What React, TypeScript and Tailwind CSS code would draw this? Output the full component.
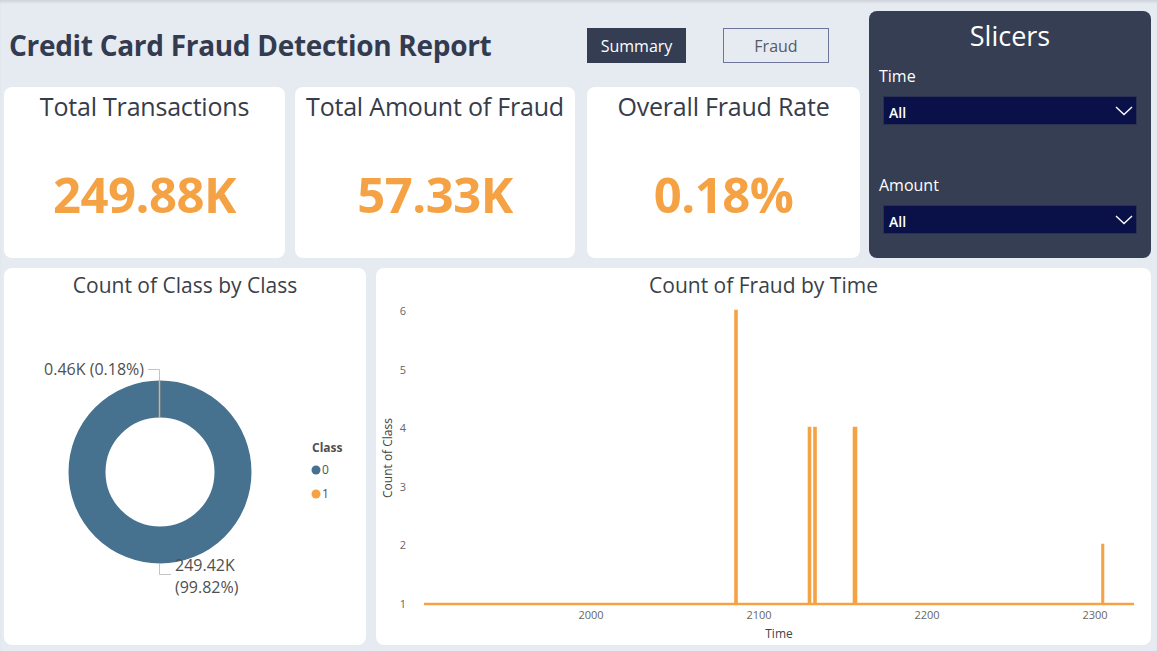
import React from "react";

const font = { fontFamily: '"Open Sans", "Noto Sans", sans-serif' };

function KpiCard({ title, value, w }: { title: string; value: string; w: string }) {
  return (
    <div className={`${w} h-[171px] bg-white rounded-[8px] flex flex-col items-center`}>
      <div className="mt-[2px] h-[34px] text-[25px] leading-[34px] text-[#363c4a] whitespace-nowrap tracking-[-0.2px]">{title}</div>
      <div className="mt-[41px] text-[49px] leading-[60px] font-bold text-[#f5a244] tracking-[-0.5px]">{value}</div>
    </div>
  );
}

function Chevron() {
  return (
    <svg width="18" height="10" viewBox="0 0 18 10" className="mr-[3px]">
      <path d="M1 1 L9 8.5 L17 1" fill="none" stroke="#ffffff" strokeWidth="1.4" />
    </svg>
  );
}

function Dropdown() {
  return (
    <div className="ml-[14px] w-[254px] h-[29px] bg-[#0a1048] border border-[#2a3150] flex items-center justify-between pl-[5px]">
      <span className="text-[14px] font-semibold text-white mt-[3px]">All</span>
      <Chevron />
    </div>
  );
}

function DonutChart() {
  return (
    <svg width="362" height="343" viewBox="0 0 362 343">
      <circle cx="156" cy="170" r="73" fill="none" stroke="#46728f" strokeWidth="37" />
      <line x1="155.5" y1="78.5" x2="155.5" y2="115.5" stroke="#d9b27c" strokeWidth="1.5" />
      <polyline points="155.5,78 155.5,67.5 144,67.5" fill="none" stroke="#c4c4c4" strokeWidth="1" />
      <text x="140" y="73" textAnchor="end" fontSize="16" fill="#505050" style={font}>0.46K (0.18%)</text>
      <polyline points="155.5,262 155.5,272.5 167,272.5" fill="none" stroke="#c4c4c4" strokeWidth="1" />
      <text x="171" y="269" fontSize="16" fill="#505050" style={font}>249.42K</text>
      <text x="171" y="291" fontSize="16" fill="#505050" style={font}>(99.82%)</text>
      <text x="308" y="150" fontSize="12" fontWeight="700" fill="#505050" style={font}>Class</text>
      <circle cx="312" cy="168" r="4.5" fill="#46728f" />
      <text x="318" y="172" fontSize="12" fill="#505050" style={font}>0</text>
      <circle cx="312" cy="192" r="4.5" fill="#f5a244" />
      <text x="318" y="196" fontSize="12" fill="#505050" style={font}>1</text>
    </svg>
  );
}

function LineChart() {
  const yLabels = [
    { v: "6", y: 9 },
    { v: "5", y: 68 },
    { v: "4", y: 126 },
    { v: "3", y: 185 },
    { v: "2", y: 243 },
    { v: "1", y: 302 },
  ];
  const xLabels = [
    { v: "2000", x: 215 },
    { v: "2100", x: 383 },
    { v: "2200", x: 551 },
    { v: "2300", x: 719 },
  ];
  const d =
    "M48 302 L359.5 302 L359.5 9 L360.5 9 L360.5 302 L433 302 L433 126 L434 126 L434 302 L438.5 302 L438.5 126 L439.5 126 L439.5 302 L478 302 L478 126 L480 126 L480 302 L726.5 302 L726.5 243 L727 243 L727 302 L758 302";
  return (
    <svg width="775" height="343" viewBox="0 0 775 343">
      {yLabels.map((l) => (
        <text key={l.v} x="27" y={l.y + 4} textAnchor="middle" fontSize="11" fill="#666666" style={font}>
          {l.v}
        </text>
      ))}
      {xLabels.map((l) => (
        <text key={l.v} x={l.x} y="317" textAnchor="middle" fontSize="11" fill="#666666" style={font}>
          {l.v}
        </text>
      ))}
      <text x="403" y="336" textAnchor="middle" fontSize="12" fill="#444444" style={font}>Time</text>
      <text
        x="0"
        y="0"
        transform="translate(16 156) rotate(-90)"
        textAnchor="middle"
        fontSize="12"
        fill="#444444"
        style={font}
      >
        Count of Class
      </text>
      <path d={d} fill="none" stroke="#f5a244" strokeWidth="2.6" strokeLinejoin="miter" />
    </svg>
  );
}

export default function App() {
  return (
    <div
      className="w-[1157px] h-[651px] bg-[#e6eaf1] overflow-hidden flex flex-col shadow-[inset_0_3px_3px_-1px_rgba(0,0,0,0.10)]"
      style={font}
    >
      <div className="flex pl-[4px] pt-[11px]">
        <div className="w-[856px] flex flex-col">
          <div className="h-[76px] flex items-start">
            <div className="w-[583px] pl-[5px] pt-[14px] text-[28px] leading-[40px] font-bold text-[#323b4f] tracking-[-0.3px] whitespace-nowrap">
              Credit Card Fraud Detection Report
            </div>
            <div className="mt-[17px] w-[99px] h-[35px] bg-[#343d52] text-white text-[16px] flex items-center justify-center">
              Summary
            </div>
            <div className="mt-[17px] ml-[37px] w-[106px] h-[35px] border border-[#70759e] text-[#555a66] text-[16px] flex items-center justify-center">
              Fraud
            </div>
          </div>
          <div className="flex h-[171px]">
            <KpiCard title="Total Transactions" value="249.88K" w="w-[281px]" />
            <div className="w-[10px]" />
            <KpiCard title="Total Amount of Fraud" value="57.33K" w="w-[280px]" />
            <div className="w-[12px]" />
            <KpiCard title="Overall Fraud Rate" value="0.18%" w="w-[273px]" />
          </div>
        </div>
        <div className="ml-[9px] w-[282px] h-[247px] bg-[#353e52] rounded-[8px] flex flex-col">
          <div className="h-[50px] text-center text-white text-[27px] leading-[50px]">Slicers</div>
          <div className="ml-[10px] mt-[2px] h-[26px] text-[16px] leading-[26px] text-white">Time</div>
          <div className="mt-[7px]">
            <Dropdown />
          </div>
          <div className="ml-[10px] mt-[47px] h-[26px] text-[16px] leading-[26px] text-white">Amount</div>
          <div className="mt-[7px]">
            <Dropdown />
          </div>
        </div>
      </div>
      <div className="flex pl-[4px] mt-[10px]">
        <div className="w-[362px] h-[377px] bg-white rounded-[8px] flex flex-col">
          <div className="h-[34px] text-center text-[21px] leading-[34px] text-[#3b3f48]">Count of Class by Class</div>
          <DonutChart />
        </div>
        <div className="ml-[10px] w-[775px] h-[377px] bg-white rounded-[8px] flex flex-col">
          <div className="h-[34px] text-center text-[21px] leading-[34px] text-[#3b3f48]">Count of Fraud by Time</div>
          <LineChart />
        </div>
      </div>
    </div>
  );
}
